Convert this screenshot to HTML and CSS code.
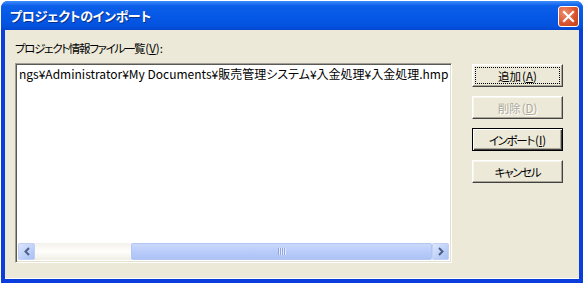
FILE: index.html
```html
<!DOCTYPE html>
<html lang="ja">

<head>
    <meta charset="UTF-8">
    <title>プロジェクトのインポート</title>
    <link rel="stylesheet" href="styles.css">
</head>

<body>
    <div class="window">
        <!-- タイトルバー -->
        <div class="titlebar">
            <span class="title">プロジェクトのインポート</span>
            <a href="#" class="close">
                <svg width="13" height="13" viewBox="0 0 13 13">
                    <path d="M2 2 L11 11 M11 2 L2 11" stroke="#fff" stroke-width="2.2" stroke-linecap="square" />
                </svg>
            </a>
        </div>
        <!-- 本体 -->
        <div class="client">
            <div class="left">
                <div class="label"><span class="kn">プロジェクト情報ファイル一覧</span><span class="acc">(<u>V</u>):</span></div>
                <div class="listbox">
                    <div class="items">
                        <div class="item">ngs¥Administrator¥My Documents¥販売管理システム¥入金処理¥入金処理.hmp</div>
                    </div>
                    <div class="hscroll">
                        <span class="arrow">
                            <svg width="8" height="9" viewBox="0 0 8 9"><path d="M6 1 L2.5 4.5 L6 8" fill="none" stroke="#4d6185" stroke-width="2" /></svg>
                        </span>
                        <div class="track">
                            <div class="thumb"><span class="grip"></span></div>
                        </div>
                        <span class="arrow">
                            <svg width="8" height="9" viewBox="0 0 8 9"><path d="M2 1 L5.5 4.5 L2 8" fill="none" stroke="#4d6185" stroke-width="2" /></svg>
                        </span>
                    </div>
                </div>
            </div>
            <div class="btns">
                <a href="#" class="btn focus">追加<span class="acc">(<u>A</u>)</span></a>
                <a href="#" class="btn disabled">削除<span class="acc">(<u>D</u>)</span></a>
                <a href="#" class="btn default"><span class="kn">インポート</span><span class="acc">(<u>I</u>)</span></a>
                <a href="#" class="btn"><span class="kn">キャンセル</span></a>
            </div>
        </div>
    </div>
</body>

</html>
```

FILE: styles.css
```css
* {
    margin: 0;
    padding: 0;
    box-sizing: border-box;
}

body {
    background: #fff;
    font-family: "Noto Sans CJK JP", "Liberation Sans", sans-serif;
    font-size: 12px;
    color: #000;
    padding: 1px 0 0 1px;
}

/* ウィンドウ枠 */
.window {
    width: 582px;
    height: 282px;
    display: flex;
    flex-direction: column;
    background: #0a3ddb;
    border-radius: 7px 7px 0 0;
    overflow: hidden;
}

/* タイトルバー */
.titlebar {
    height: 29px;
    display: flex;
    align-items: center;
    justify-content: space-between;
    padding: 0 4px 0 9px;
    background: linear-gradient(#3d8ef8 0, #2a7af4 2px, #0c5fe8 5px, #0559e6 50%, #0453df 85%, #0345cf 100%);
}

.title {
    color: #fff;
    font-weight: bold;
    font-size: 13px;
    font-feature-settings: "palt";
    text-shadow: 1px 1px #0a2f8c;
    letter-spacing: -0.3px;
}

.close {
    width: 21px;
    height: 21px;
    margin-top: 2px;
    display: flex;
    align-items: center;
    justify-content: center;
    border: 1px solid #fff;
    border-radius: 3px;
    background: radial-gradient(circle at 30% 30%, #ef8c6c, #d9522c 60%, #c1401b);
}

/* 本体 */
.client {
    flex: 1;
    margin: 0 4px 4px 4px;
    background: #ece9d8;
    display: flex;
    gap: 20px;
    padding: 10px 0 0 10px;
    border-bottom: 1px solid #fff;
}

.left {
    display: flex;
    flex-direction: column;
}

/* 仮名の部分は少し詰める */
.kn {
    letter-spacing: -1.3px;
    font-feature-settings: "palt";
}

.acc {
    letter-spacing: 0;
    padding-left: 1px;
}

.label {
    height: 16px;
    line-height: 16px;
    margin-bottom: 7px;
    font-size: 11.5px;
}

/* リストボックス */
.listbox {
    width: 437px;
    height: 200px;
    display: flex;
    flex-direction: column;
    background: #fff;
    border: 1px solid;
    border-color: #a09f97 #fff #fff #a09f97;
    box-shadow: inset 1px 1px #5a5a55, inset -1px -1px #e3e0d0;
    padding: 2px;
}

.items {
    flex: 1;
    padding: 0 0 0 1px;
}

.item {
    height: 16px;
    line-height: 16px;
    white-space: nowrap;
    overflow: hidden;
    font-feature-settings: "palt";
}

/* 横スクロールバー */
.hscroll {
    height: 17px;
    display: flex;
    background: linear-gradient(#f3f1ec, #fefefb 50%, #f0eee6);
}

.arrow {
    width: 17px;
    height: 17px;
    display: flex;
    align-items: center;
    justify-content: center;
    border: 1px solid #c0cff2;
    border-radius: 2px;
    background: linear-gradient(135deg, #dde7fd, #bccff9 60%, #a9c0f4);
}

.track {
    flex: 1;
    display: flex;
}

.thumb {
    flex: 1;
    margin-left: 96px;
    display: flex;
    align-items: center;
    justify-content: center;
    border: 1px solid #b3c6f2;
    border-radius: 2px;
    background: linear-gradient(#c9d8fc, #b9ccfa 50%, #adc3f6);
}

.grip {
    width: 8px;
    height: 7px;
    background: repeating-linear-gradient(90deg, #8fa6e0 0, #8fa6e0 1px, #e4ecfe 1px, #e4ecfe 2px);
}

/* ボタン */
.btns {
    display: flex;
    flex-direction: column;
    gap: 9px;
    padding-top: 24px;
}

.btn {
    width: 91px;
    height: 23px;
    display: flex;
    align-items: center;
    justify-content: center;
    text-decoration: none;
    color: #000;
    background: #ece9d8;
    border: 1px solid;
    border-color: #fff #404040 #404040 #fff;
    box-shadow: inset -1px -1px #aca899, inset 1px 1px #f6f5ee;
    font-size: 11.5px;
}

.btn.focus {
    outline: 1px dotted #000;
    outline-offset: -4px;
}

.btn.disabled {
    color: #aca899;
    text-shadow: 1px 1px #fff;
}

.btn.default {
    border: 1px solid #000;
    box-shadow: inset 1px 1px #fff, inset -1px -1px #404040, inset -2px -2px #aca899;
}
```
